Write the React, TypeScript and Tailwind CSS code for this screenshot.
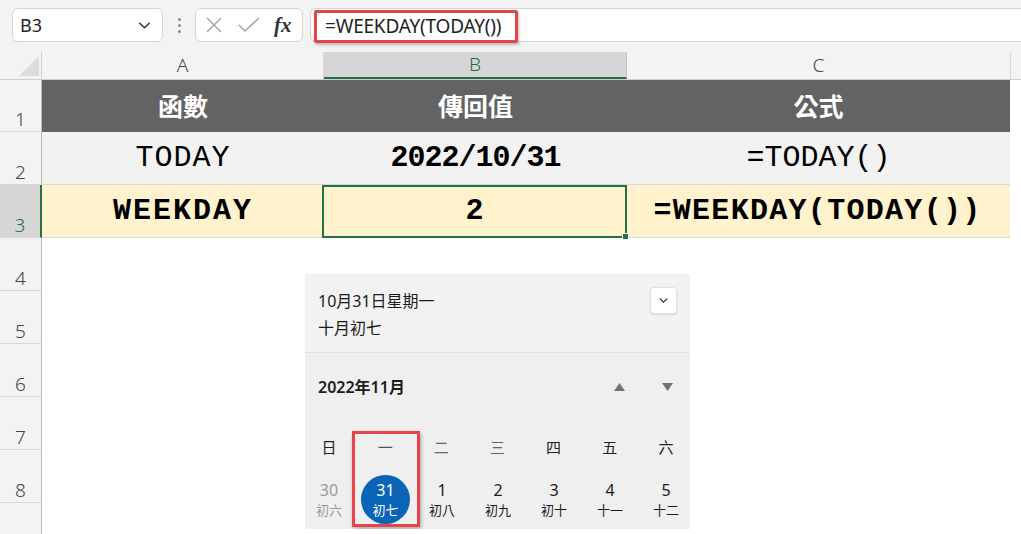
import React from "react";

const ChevronDown = ({ size = 14, color = "#333" }: { size?: number; color?: string }) => (
  <svg width={size} height={size} viewBox="0 0 16 16" fill="none">
    <path d="M3 5.5l5 5 5-5" stroke={color} strokeWidth="1.6" strokeLinecap="round" strokeLinejoin="round" />
  </svg>
);

const Toolbar = () => (
  <div className="flex h-[52px] items-start bg-[#f3f3f3] pl-[12px] pt-[8px]">
    <div className="flex h-[34px] w-[151px] items-center justify-between rounded-[6px] border border-[#d4d4d4] bg-white pl-[7px] pr-[10px]">
      <span className="text-[18px] text-[#222]">B3</span>
      <ChevronDown size={15} color="#333" />
    </div>
    <div className="flex h-[34px] w-[32px] flex-col items-center justify-center gap-[3px]">
      <span className="h-[3px] w-[3px] rounded-full bg-[#8a8a8a]" />
      <span className="h-[3px] w-[3px] rounded-full bg-[#8a8a8a]" />
      <span className="h-[3px] w-[3px] rounded-full bg-[#8a8a8a]" />
    </div>
    <div className="flex h-[34px] w-[108px] items-center rounded-[6px] border border-[#d4d4d4] bg-white pl-[9px]">
      <svg width="18" height="18" viewBox="0 0 18 18">
        <path d="M2 2l14 14M16 2L2 16" stroke="#a0a0a0" strokeWidth="1.4" />
      </svg>
      <svg width="24" height="18" viewBox="0 0 24 18" className="ml-[14px]">
        <path d="M2 9l6 6L22 2" stroke="#a0a0a0" strokeWidth="1.4" fill="none" />
      </svg>
      <span className="ml-[13px] font-['Liberation_Serif',serif] text-[21px] font-bold italic leading-none text-[#333]">
        fx
      </span>
    </div>
    <div className="relative ml-[7px] h-[34px] flex-1 rounded-l-[6px] border-y border-l border-[#d4d4d4] bg-white">
      <span className="absolute left-[14px] top-[3px] text-[19px] tracking-[-0.2px] text-[#222]">=WEEKDAY(TODAY())</span>
      <div className="absolute left-[3px] top-[1px] h-[33px] w-[204px] rounded-[2px] border-[3px] border-[#e8434a] shadow-[1px_2px_3px_rgba(0,0,0,0.25)]" />
    </div>
  </div>
);

const ColumnHeaders = () => (
  <div className="flex h-[28px] border-b border-[#cfcfcf] bg-[#f3f3f3] text-[19px] font-light text-[#444]">
    <div className="relative w-[42px] border-r border-[#cfcfcf]">
      <svg className="absolute left-[19px] top-[4px]" width="20" height="20" viewBox="0 0 20 20">
        <polygon points="20,0 20,20 0,20" fill="#dcdcdc" />
      </svg>
    </div>
    <div className="flex w-[282px] items-center justify-center border-r border-[#d8d8d8]">A</div>
    <div className="flex w-[303px] items-center justify-center border-b-2 border-r border-b-[#217346] border-r-[#c4c4c4] bg-[#d6d6d6] text-[#1e6e42]">
      B
    </div>
    <div className="flex w-[384px] items-center justify-center border-r border-[#d8d8d8]">C</div>
    <div className="flex-1" />
  </div>
);

const RowHead = ({ n, active }: { n?: number; active?: boolean }) => (
  <div
    className={
      active
        ? "flex w-[42px] shrink-0 items-end justify-center border-b border-r-2 border-b-[#d8d8d8] border-r-[#217346] bg-[#d6d6d6] text-[19px] font-light leading-[24px] text-[#1e6e42]"
        : "flex w-[42px] shrink-0 items-end justify-center border-b border-r border-b-[#d8d8d8] border-r-[#bdbdbd] bg-[#f3f3f3] text-[19px] font-light leading-[24px] text-[#444]"
    }
  >
    {n}
  </div>
);

const cellMono = "font-['Liberation_Mono','Noto_Sans_CJK_TC',monospace] text-[30px] text-black";

const Grid = () => (
  <div className="flex flex-col">
    <div className="flex h-[52px]">
      <RowHead n={1} />
      <div className="flex w-[968px] bg-[#636363] font-['Noto_Sans_CJK_TC',sans-serif] text-[25px] font-bold text-white">
        <div className="flex w-[282px] items-center justify-center">函數</div>
        <div className="flex w-[303px] items-center justify-center">傳回值</div>
        <div className="flex w-[383px] items-center justify-center">公式</div>
      </div>
      <div className="flex-1" />
    </div>
    <div className="flex h-[53px]">
      <RowHead n={2} />
      <div className={`flex w-[968px] border-b border-[#d8d8d8] bg-[#f2f2f2] ${cellMono}`}>
        <div className="flex w-[282px] items-center justify-center tracking-[1px]">TODAY</div>
        <div className="flex w-[303px] items-center justify-center font-bold tracking-[-1px]">2022/10/31</div>
        <div className="flex w-[383px] items-center justify-center">=TODAY()</div>
      </div>
      <div className="flex-1" />
    </div>
    <div className="flex h-[53px]">
      <RowHead n={3} active />
      <div className={`flex w-[968px] border-b border-[#d8d8d8] bg-[#fff2cc] font-bold ${cellMono}`}>
        <div className="flex w-[282px] items-center justify-center tracking-[2px]">WEEKDAY</div>
        <div className="relative -mb-px -ml-[2px] flex w-[305px] items-center justify-center border-2 border-[#217346]">
          2
          <span className="absolute -bottom-[4px] -right-[4px] h-[7px] w-[7px] border border-white bg-[#217346]" />
        </div>
        <div className="flex w-[381px] items-center justify-center tracking-[1.3px]">=WEEKDAY(TODAY())</div>
      </div>
      <div className="flex-1" />
    </div>
    {[4, 5, 6, 7, 8].map((n) => (
      <div key={n} className="flex h-[53px]">
        <RowHead n={n} />
        <div className="flex-1 bg-white" />
      </div>
    ))}
    <div className="flex h-[53px]">
      <RowHead />
      <div className="flex-1 bg-white" />
    </div>
  </div>
);

const weekdays = [
  { t: "日", c: "text-[#222]" },
  { t: "一", c: "text-[#555]" },
  { t: "二", c: "text-[#666]" },
  { t: "三", c: "text-[#666]" },
  { t: "四", c: "text-[#222]" },
  { t: "五", c: "text-[#222]" },
  { t: "六", c: "text-[#222]" },
];

const days = [
  { d: "30", l: "初六", dim: true },
  { d: "31", l: "初七", today: true },
  { d: "1", l: "初八" },
  { d: "2", l: "初九" },
  { d: "3", l: "初十" },
  { d: "4", l: "十一" },
  { d: "5", l: "十二" },
];

const CalendarPopup = () => (
  <div className="absolute left-[305px] top-[274px] flex h-[255px] w-[385px] flex-col overflow-hidden font-['Noto_Sans','Noto_Sans_CJK_TC',sans-serif]">
    <div className="relative h-[79px] border-b border-[#e0e0e0] bg-[#f2f2f2] px-[13px] pt-[15px] text-[#1b1b1b]">
      <div className="text-[16px] leading-[24px]">10月31日星期一</div>
      <div className="mt-[2px] text-[16px] leading-[26px]">十月初七</div>
      <div className="absolute right-[13px] top-[13px] flex h-[27px] w-[27px] items-center justify-center rounded-[4px] border border-[#e2e2e2] bg-white shadow-[0_1px_2px_rgba(0,0,0,0.12)]">
        <ChevronDown size={11} color="#222" />
      </div>
    </div>
    <div className="flex flex-1 flex-col bg-[#efefef]">
      <div className="flex h-[68px] items-center pl-[13px] pr-[17px]">
        <span className="flex-1 text-[16px] font-semibold text-[#1b1b1b]">2022年11月</span>
        <svg width="11" height="8" viewBox="0 0 11 8">
          <polygon points="5.5,0 11,8 0,8" fill="#707070" />
        </svg>
        <svg width="11" height="8" viewBox="0 0 11 8" className="ml-[37px]">
          <polygon points="0,0 11,0 5.5,8" fill="#707070" />
        </svg>
      </div>
      <div className="flex h-[52px] items-center justify-between font-['Noto_Sans_CJK_TC',sans-serif] text-[15px]">
        {weekdays.map((w) => (
          <span key={w.t} className={`w-[48px] text-center ${w.c}`}>
            {w.t}
          </span>
        ))}
      </div>
      <div className="flex h-[56px] justify-between pt-[2px]">
        {days.map((x) => (
          <div
            key={x.d}
            className={
              x.today
                ? "flex h-[49px] w-[49px] flex-col items-center justify-center rounded-full bg-[#0a64b5] text-white"
                : `flex h-[49px] w-[48px] flex-col items-center justify-center ${x.dim ? "text-[#9a9a9a]" : "text-[#1b1b1b]"}`
            }
          >
            <span className="text-[16px] leading-[21px]">{x.d}</span>
            <span className="font-['Noto_Sans_CJK_TC',sans-serif] text-[13px] leading-[18px]">{x.l}</span>
          </div>
        ))}
      </div>
    </div>
    <div className="absolute left-[47px] top-[157px] h-[96px] w-[68px] border-[3px] border-[#e8434a] shadow-[1px_2px_4px_rgba(0,0,0,0.3)]" />
  </div>
);

export default function App() {
  return (
    <div className="relative h-[534px] w-[1021px] overflow-hidden bg-white font-['Noto_Sans','Noto_Sans_CJK_TC',sans-serif]">
      <Toolbar />
      <ColumnHeaders />
      <Grid />
      <CalendarPopup />
    </div>
  );
}
